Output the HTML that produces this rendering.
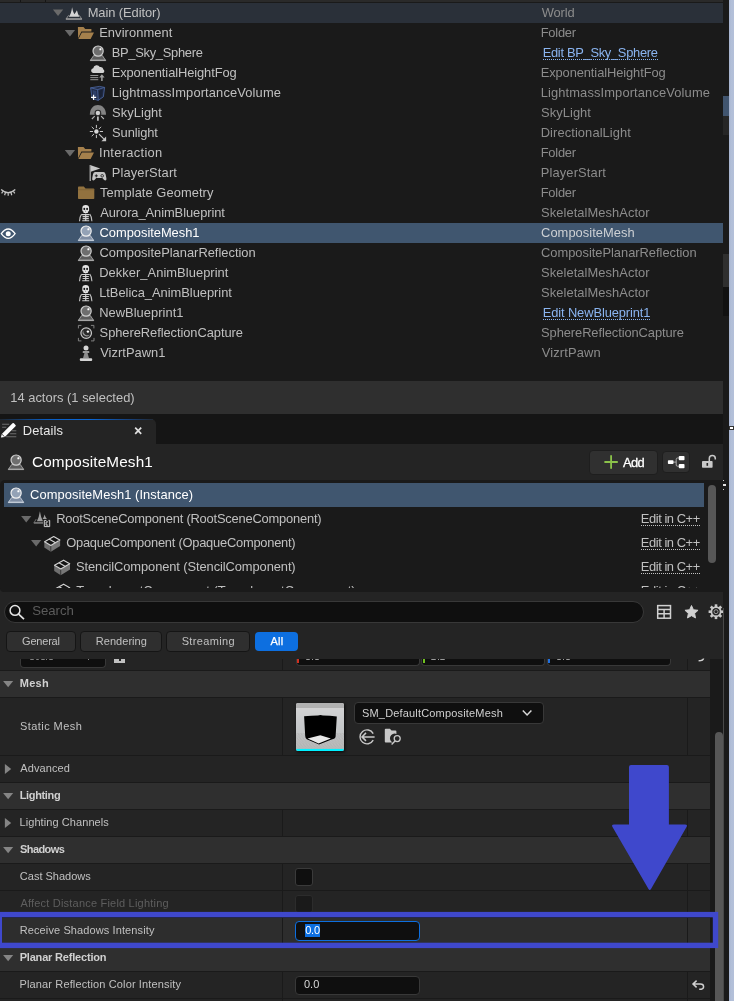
<!DOCTYPE html>
<html lang="en"><head><meta charset="utf-8"><title>Details</title>
<style>
html,body{margin:0;padding:0;background:#1a1a1a;}
body{width:734px;height:1001px;position:relative;overflow:hidden;font-family:"Liberation Sans", sans-serif;}
#w{position:absolute;left:0;top:0;width:734px;height:1001px;overflow:hidden;will-change:transform;}
#w>div,#w>svg,#w>span{position:absolute;}
.t{white-space:nowrap;display:block;}
svg{overflow:visible;}
</style></head><body><div id="w">
<div style="left:0px;top:0px;width:734px;height:1001px;background:#1a1a1a;"></div>
<div style="left:0px;top:0px;width:723px;height:2px;background:#2a2a2a;"></div>
<div style="left:0px;top:3px;width:723px;height:20px;background:#2a3039;"></div>
<div style="left:0px;top:223px;width:723px;height:20px;background:#40566f;"></div>
<span class="t" style="left:87.67px;top:7px;font-size:12.9px;line-height:12.9px;color:#c0c0c0;letter-spacing:-0.067px;">Main (Editor)</span>
<span class="t" style="left:99.17px;top:27px;font-size:12.9px;line-height:12.9px;color:#c0c0c0;letter-spacing:0.090px;">Environment</span>
<span class="t" style="left:111.67px;top:47px;font-size:12.9px;line-height:12.9px;color:#c0c0c0;letter-spacing:-0.277px;">BP_Sky_Sphere</span>
<span class="t" style="left:111.67px;top:67px;font-size:12.9px;line-height:12.9px;color:#c0c0c0;letter-spacing:-0.096px;">ExponentialHeightFog</span>
<span class="t" style="left:111.67px;top:87px;font-size:12.9px;line-height:12.9px;color:#c0c0c0;letter-spacing:0.126px;">LightmassImportanceVolume</span>
<span class="t" style="left:112.12px;top:107px;font-size:12.9px;line-height:12.9px;color:#c0c0c0;letter-spacing:0.054px;">SkyLight</span>
<span class="t" style="left:112.12px;top:127px;font-size:12.9px;line-height:12.9px;color:#c0c0c0;letter-spacing:-0.110px;">Sunlight</span>
<span class="t" style="left:99.04px;top:147px;font-size:12.9px;line-height:12.9px;color:#c0c0c0;letter-spacing:0.296px;">Interaction</span>
<span class="t" style="left:111.67px;top:167px;font-size:12.9px;line-height:12.9px;color:#c0c0c0;letter-spacing:0.151px;">PlayerStart</span>
<span class="t" style="left:99.94px;top:187px;font-size:12.9px;line-height:12.9px;color:#c0c0c0;letter-spacing:0.061px;">Template Geometry</span>
<span class="t" style="left:100.20px;top:207px;font-size:12.9px;line-height:12.9px;color:#c0c0c0;letter-spacing:-0.072px;">Aurora_AnimBlueprint</span>
<span class="t" style="left:99.56px;top:227px;font-size:12.9px;line-height:12.9px;color:#ffffff;letter-spacing:-0.028px;">CompositeMesh1</span>
<span class="t" style="left:99.56px;top:247px;font-size:12.9px;line-height:12.9px;color:#c0c0c0;letter-spacing:-0.003px;">CompositePlanarReflection</span>
<span class="t" style="left:99.17px;top:267px;font-size:12.9px;line-height:12.9px;color:#c0c0c0;letter-spacing:0.054px;">Dekker_AnimBlueprint</span>
<span class="t" style="left:99.17px;top:287px;font-size:12.9px;line-height:12.9px;color:#c0c0c0;letter-spacing:-0.024px;">LtBelica_AnimBlueprint</span>
<span class="t" style="left:99.17px;top:307px;font-size:12.9px;line-height:12.9px;color:#c0c0c0;letter-spacing:0.041px;">NewBlueprint1</span>
<span class="t" style="left:99.62px;top:327px;font-size:12.9px;line-height:12.9px;color:#c0c0c0;letter-spacing:-0.065px;">SphereReflectionCapture</span>
<span class="t" style="left:100.20px;top:347px;font-size:12.9px;line-height:12.9px;color:#c0c0c0;letter-spacing:0.037px;">VizrtPawn1</span>
<span class="t" style="left:541.70px;top:7px;font-size:12.9px;line-height:12.9px;color:#8c8c8c;letter-spacing:-0.110px;">World</span>
<span class="t" style="left:540.67px;top:27px;font-size:12.9px;line-height:12.9px;color:#8c8c8c;letter-spacing:-0.228px;">Folder</span>
<span class="t" style="left:542.67px;top:47px;font-size:12.9px;line-height:12.9px;color:#8ab4f0;letter-spacing:-0.301px;height:12px;border-bottom:1px dotted #8ab4f0;">Edit BP_Sky_Sphere</span>
<span class="t" style="left:540.67px;top:67px;font-size:12.9px;line-height:12.9px;color:#8c8c8c;letter-spacing:-0.096px;">ExponentialHeightFog</span>
<span class="t" style="left:540.67px;top:87px;font-size:12.9px;line-height:12.9px;color:#8c8c8c;letter-spacing:0.126px;">LightmassImportanceVolume</span>
<span class="t" style="left:541.12px;top:107px;font-size:12.9px;line-height:12.9px;color:#8c8c8c;letter-spacing:0.054px;">SkyLight</span>
<span class="t" style="left:540.67px;top:127px;font-size:12.9px;line-height:12.9px;color:#8c8c8c;letter-spacing:0.095px;">DirectionalLight</span>
<span class="t" style="left:540.67px;top:147px;font-size:12.9px;line-height:12.9px;color:#8c8c8c;letter-spacing:-0.228px;">Folder</span>
<span class="t" style="left:540.67px;top:167px;font-size:12.9px;line-height:12.9px;color:#8c8c8c;letter-spacing:0.151px;">PlayerStart</span>
<span class="t" style="left:540.67px;top:187px;font-size:12.9px;line-height:12.9px;color:#8c8c8c;letter-spacing:-0.228px;">Folder</span>
<span class="t" style="left:541.12px;top:207px;font-size:12.9px;line-height:12.9px;color:#8c8c8c;letter-spacing:0.061px;">SkeletalMeshActor</span>
<span class="t" style="left:541.06px;top:227px;font-size:12.9px;line-height:12.9px;color:#cdd0d4;letter-spacing:0.041px;">CompositeMesh</span>
<span class="t" style="left:541.06px;top:247px;font-size:12.9px;line-height:12.9px;color:#8c8c8c;letter-spacing:-0.024px;">CompositePlanarReflection</span>
<span class="t" style="left:541.12px;top:267px;font-size:12.9px;line-height:12.9px;color:#8c8c8c;letter-spacing:0.061px;">SkeletalMeshActor</span>
<span class="t" style="left:541.12px;top:287px;font-size:12.9px;line-height:12.9px;color:#8c8c8c;letter-spacing:0.061px;">SkeletalMeshActor</span>
<span class="t" style="left:542.67px;top:307px;font-size:12.9px;line-height:12.9px;color:#8ab4f0;letter-spacing:-0.106px;height:12px;border-bottom:1px dotted #8ab4f0;">Edit NewBlueprint1</span>
<span class="t" style="left:541.12px;top:327px;font-size:12.9px;line-height:12.9px;color:#8c8c8c;letter-spacing:-0.088px;">SphereReflectionCapture</span>
<span class="t" style="left:541.70px;top:347px;font-size:12.9px;line-height:12.9px;color:#8c8c8c;letter-spacing:0.149px;">VizrtPawn</span>
<div style="left:723px;top:0px;width:6px;height:1001px;background:#1a1a1a;"></div>
<div style="left:723px;top:96px;width:6px;height:20px;background:#41556f;"></div>
<div style="left:723px;top:116px;width:6px;height:19px;background:#262626;"></div>
<div style="left:723px;top:254px;width:6px;height:33px;background:#2f2f2f;"></div>
<div style="left:723px;top:287px;width:6px;height:29px;background:#111111;"></div>
<div style="left:729px;top:0px;width:5px;height:1001px;background:linear-gradient(90deg,#a6b3cf,#b2bfd8 40%,#b4c0d9);"></div>
<div style="left:729.3px;top:425.5px;width:4.4px;height:4.4px;background:#ffffff;border:1px solid #333;box-sizing:border-box;"></div>
<div style="left:723.4px;top:480px;width:1px;height:1.2px;background:#d0d0d0;"></div>
<div style="left:723.2px;top:484px;width:2.6px;height:2px;background:#e0e0e0;"></div>
<div style="left:723.4px;top:488.6px;width:1px;height:1.2px;background:#d0d0d0;"></div>
<div style="left:723.2px;top:608px;width:1px;height:393px;background:#484848;"></div>
<div style="left:20.3px;top:0px;width:1px;height:1.6px;background:#151515;"></div>
<div style="left:45.3px;top:0px;width:1px;height:1.6px;background:#151515;"></div>
<div style="left:0px;top:381px;width:723px;height:33px;background:#2f2f2f;"></div>
<span class="t" style="left:10.23px;top:392px;font-size:12.9px;line-height:12.9px;color:#c0c0c0;letter-spacing:0.022px;">14 actors (1 selected)</span>
<div style="left:0px;top:414px;width:723px;height:30px;background:#151515;"></div>
<div style="left:0px;top:418.6px;width:156px;height:25.4px;background:#242424;border-top-right-radius:5px;"></div>
<div style="left:0px;top:418.6px;width:153px;height:1.4px;background:linear-gradient(90deg,#1e2630 0%,#0a5cc0 30%,#0a68d8 58%,#17407a 85%,#222a34 100%);"></div>
<span class="t" style="left:22.77px;top:425px;font-size:12.9px;line-height:12.9px;color:#e8e8e8;letter-spacing:0.130px;">Details</span>
<svg style="left:0;top:0" width="160" height="445"><path d="M135.2 427.7 L141.2 433.9 M141.2 427.7 L135.2 433.9" stroke="#e0e0e0" stroke-width="1.7"/></svg>
<div style="left:0px;top:444px;width:723px;height:557px;background:#242424;"></div>
<span class="t" style="left:32.04px;top:454px;font-size:15.3px;line-height:15.3px;color:#ffffff;letter-spacing:0.134px;">CompositeMesh1</span>
<div style="left:588.7px;top:449.6px;width:69.4px;height:25.2px;background:#303030;border:1px solid #1e1e1e;border-radius:4px;box-sizing:border-box;"></div>
<span class="t" style="left:623.10px;top:457px;font-size:12.9px;line-height:12.9px;color:#ffffff;letter-spacing:-0.624px;-webkit-text-stroke:0.3px #ffffff;">Add</span>
<div style="left:662px;top:450.8px;width:28.2px;height:22.2px;background:#303030;border:1px solid #1e1e1e;border-radius:4px;box-sizing:border-box;"></div>
<div style="left:0px;top:479.5px;width:723px;height:112px;background:#1a1a1a;border-radius:5px 0 0 5px;"></div>
<div style="left:4px;top:483px;width:700px;height:24px;background:#40566f;"></div>
<span class="t" style="left:30.05px;top:489px;font-size:12.9px;line-height:12.9px;color:#ffffff;letter-spacing:0.075px;">CompositeMesh1 (Instance)</span>
<span class="t" style="left:56.17px;top:513px;font-size:12.9px;line-height:12.9px;color:#c0c0c0;letter-spacing:-0.198px;">RootSceneComponent (RootSceneComponent)</span>
<span class="t" style="left:66.22px;top:537px;font-size:12.9px;line-height:12.9px;color:#c0c0c0;letter-spacing:-0.243px;">OpaqueComponent (OpaqueComponent)</span>
<span class="t" style="left:76.02px;top:561px;font-size:12.9px;line-height:12.9px;color:#c0c0c0;letter-spacing:-0.094px;">StencilComponent (StencilComponent)</span>
<span class="t" style="left:76.34px;top:585px;font-size:12.9px;line-height:12.9px;color:#c0c0c0;letter-spacing:0.003px;">TranslucentComponent (TranslucentComponent)</span>
<span class="t" style="left:640.87px;top:513px;font-size:12.9px;line-height:12.9px;color:#c0c0c0;letter-spacing:-0.441px;height:12px;border-bottom:1px dotted #c0c0c0;">Edit in C++</span>
<span class="t" style="left:640.87px;top:537px;font-size:12.9px;line-height:12.9px;color:#c0c0c0;letter-spacing:-0.441px;height:12px;border-bottom:1px dotted #c0c0c0;">Edit in C++</span>
<span class="t" style="left:640.87px;top:561px;font-size:12.9px;line-height:12.9px;color:#c0c0c0;letter-spacing:-0.441px;height:12px;border-bottom:1px dotted #c0c0c0;">Edit in C++</span>
<span class="t" style="left:640.87px;top:585px;font-size:12.9px;line-height:12.9px;color:#c0c0c0;letter-spacing:-0.441px;height:12px;border-bottom:1px dotted #c0c0c0;">Edit in C++</span>
<div style="left:708px;top:485px;width:7.5px;height:77.5px;background:#575757;border-radius:4px;"></div>
<div style="left:0px;top:588px;width:723px;height:3.5px;background:#1a1a1a;border-radius:0 0 0 5px;"></div>
<div style="left:0px;top:591.5px;width:723px;height:10px;background:#242424;"></div>
<div style="left:4px;top:601px;width:640px;height:22px;background:#0f0f0f;border:1px solid #383838;border-radius:11px;box-sizing:border-box;"></div>
<span class="t" style="left:32.31px;top:604px;font-size:13.2px;line-height:13.2px;color:#5c5c5c;letter-spacing:-0.057px;">Search</span>
<div style="left:6.2px;top:631px;width:69.8px;height:20.6px;background:#2f2f2f;border:1px solid #151515;border-radius:4px;box-sizing:border-box;"></div>
<span class="t" style="left:22.05px;top:636px;font-size:11px;line-height:11px;color:#c0c0c0;letter-spacing:-0.200px;">General</span>
<div style="left:80.2px;top:631px;width:81.39999999999999px;height:20.6px;background:#2f2f2f;border:1px solid #151515;border-radius:4px;box-sizing:border-box;"></div>
<span class="t" style="left:95.82px;top:636px;font-size:11px;line-height:11px;color:#c0c0c0;letter-spacing:0.037px;">Rendering</span>
<div style="left:166.3px;top:631px;width:83.39999999999998px;height:20.6px;background:#2f2f2f;border:1px solid #151515;border-radius:4px;box-sizing:border-box;"></div>
<span class="t" style="left:181.70px;top:636px;font-size:11px;line-height:11px;color:#c0c0c0;letter-spacing:0.342px;">Streaming</span>
<div style="left:255px;top:632px;width:43.39999999999998px;height:18.6px;background:#0d6fe0;border-radius:4px;"></div>
<span class="t" style="left:270.60px;top:636px;font-size:11px;line-height:11px;color:#ffffff;letter-spacing:0.180px;-webkit-text-stroke:0.25px #fff;">All</span>
<div style="left:0px;top:658.5px;width:710px;height:343px;background:#1a1a1a;"></div>
<div style="left:0px;top:658.5px;width:710px;height:11.5px;background:#242424;"></div>
<div style="left:282.2px;top:658.5px;width:1px;height:11.5px;background:#1a1a1a;"></div>
<div style="left:687.2px;top:658.5px;width:1px;height:11.5px;background:#1a1a1a;"></div>
<div style="left:0px;top:670.0px;width:710px;height:1px;background:#1a1a1a;"></div>
<div style="left:0px;top:671px;width:710px;height:26px;background:#2f2f2f;"></div>
<div style="left:0px;top:697px;width:710px;height:1px;background:#1a1a1a;"></div>
<span class="t" style="left:19.73px;top:678px;font-size:11px;line-height:11px;color:#d0d0d0;font-weight:700;letter-spacing:0.256px;">Mesh</span>
<div style="left:0px;top:698px;width:710px;height:57px;background:#242424;"></div>
<div style="left:282.2px;top:698px;width:1px;height:57px;background:#1a1a1a;"></div>
<div style="left:687.2px;top:698px;width:1px;height:57px;background:#1a1a1a;"></div>
<div style="left:0px;top:755px;width:710px;height:1px;background:#1a1a1a;"></div>
<span class="t" style="left:20.10px;top:721px;font-size:11px;line-height:11px;color:#c0c0c0;letter-spacing:0.420px;">Static Mesh</span>
<div style="left:0px;top:756px;width:710px;height:26px;background:#242424;"></div>
<div style="left:0px;top:782px;width:710px;height:1px;background:#1a1a1a;"></div>
<span class="t" style="left:20.30px;top:763px;font-size:11px;line-height:11px;color:#c0c0c0;letter-spacing:0.078px;">Advanced</span>
<div style="left:0px;top:783px;width:710px;height:26px;background:#2f2f2f;"></div>
<div style="left:0px;top:809px;width:710px;height:1px;background:#1a1a1a;"></div>
<span class="t" style="left:19.68px;top:790px;font-size:11px;line-height:11px;color:#d0d0d0;font-weight:700;letter-spacing:-0.347px;">Lighting</span>
<div style="left:0px;top:810px;width:710px;height:26px;background:#242424;"></div>
<div style="left:282.2px;top:810px;width:1px;height:26px;background:#1a1a1a;"></div>
<div style="left:687.2px;top:810px;width:1px;height:26px;background:#1a1a1a;"></div>
<div style="left:0px;top:836px;width:710px;height:1px;background:#1a1a1a;"></div>
<span class="t" style="left:19.52px;top:817px;font-size:11px;line-height:11px;color:#c0c0c0;letter-spacing:0.075px;">Lighting Channels</span>
<div style="left:0px;top:837px;width:710px;height:26px;background:#2f2f2f;"></div>
<div style="left:0px;top:863px;width:710px;height:1px;background:#1a1a1a;"></div>
<span class="t" style="left:20.12px;top:844px;font-size:11px;line-height:11px;color:#d0d0d0;font-weight:700;letter-spacing:-0.602px;">Shadows</span>
<div style="left:0px;top:864px;width:710px;height:26px;background:#242424;"></div>
<div style="left:282.2px;top:864px;width:1px;height:26px;background:#1a1a1a;"></div>
<div style="left:687.2px;top:864px;width:1px;height:26px;background:#1a1a1a;"></div>
<div style="left:0px;top:890px;width:710px;height:1px;background:#1a1a1a;"></div>
<span class="t" style="left:19.85px;top:871px;font-size:11px;line-height:11px;color:#c0c0c0;">Cast Shadows</span>
<div style="left:0px;top:891px;width:710px;height:26px;background:#242424;"></div>
<div style="left:282.2px;top:891px;width:1px;height:26px;background:#1a1a1a;"></div>
<div style="left:687.2px;top:891px;width:1px;height:26px;background:#1a1a1a;"></div>
<div style="left:0px;top:917px;width:710px;height:1px;background:#1a1a1a;"></div>
<span class="t" style="left:20.40px;top:898px;font-size:11px;line-height:11px;color:#5e5e5e;letter-spacing:0.204px;">Affect Distance Field Lighting</span>
<div style="left:0px;top:918px;width:710px;height:26px;background:#242424;"></div>
<div style="left:282.2px;top:918px;width:1px;height:26px;background:#1a1a1a;"></div>
<div style="left:687.2px;top:918px;width:1px;height:26px;background:#1a1a1a;"></div>
<div style="left:0px;top:944px;width:710px;height:1px;background:#1a1a1a;"></div>
<div style="left:0px;top:918px;width:282.2px;height:26px;background:#2d2d2d;"></div>
<div style="left:283.2px;top:918px;width:404px;height:26px;background:#2d2d2d;"></div>
<div style="left:688.2px;top:918px;width:21.8px;height:26px;background:#2d2d2d;"></div>
<span class="t" style="left:19.72px;top:925px;font-size:11px;line-height:11px;color:#c0c0c0;letter-spacing:0.109px;">Receive Shadows Intensity</span>
<div style="left:0px;top:945px;width:710px;height:26px;background:#2f2f2f;"></div>
<div style="left:0px;top:971px;width:710px;height:1px;background:#1a1a1a;"></div>
<span class="t" style="left:19.68px;top:952px;font-size:11px;line-height:11px;color:#d0d0d0;font-weight:700;letter-spacing:-0.186px;">Planar Reflection</span>
<div style="left:0px;top:972px;width:710px;height:26px;background:#242424;"></div>
<div style="left:282.2px;top:972px;width:1px;height:26px;background:#1a1a1a;"></div>
<div style="left:687.2px;top:972px;width:1px;height:26px;background:#1a1a1a;"></div>
<div style="left:0px;top:998px;width:710px;height:1px;background:#1a1a1a;"></div>
<span class="t" style="left:19.52px;top:979px;font-size:11px;line-height:11px;color:#c0c0c0;letter-spacing:0.133px;">Planar Reflection Color Intensity</span>
<div style="left:0px;top:999px;width:710px;height:2px;background:#242424;"></div>
<div style="left:282.2px;top:999px;width:1px;height:2px;background:#1a1a1a;"></div>
<div style="left:687.2px;top:999px;width:1px;height:2px;background:#1a1a1a;"></div>
<div style="left:0px;top:1001px;width:710px;height:1px;background:#1a1a1a;"></div>
<div style="left:710px;top:658.5px;width:13px;height:343px;background:#1a1a1a;"></div>
<div style="left:714.5px;top:732px;width:8px;height:275px;background:#575757;border-radius:4px;"></div>
<div style="left:20px;top:658.5px;width:86px;height:9px;background:#0f0f0f;border:1px solid #383838;border-top:none;border-radius:0 0 4px 4px;box-sizing:border-box;"></div>
<div style="left:30px;top:658.5px;width:4px;height:1.6px;background:#808080;border-radius:0 0 2px 2px;"></div>
<div style="left:35.6px;top:658.5px;width:3.6px;height:1.6px;background:#808080;border-radius:0 0 2px 2px;"></div>
<div style="left:40.6px;top:658.5px;width:4px;height:1.6px;background:#808080;border-radius:0 0 2px 2px;"></div>
<div style="left:46px;top:658.5px;width:1.2px;height:1.6px;background:#808080;"></div>
<div style="left:48.6px;top:658.5px;width:4px;height:1.6px;background:#808080;border-radius:0 0 2px 2px;"></div>
<div style="left:87.5px;top:658.5px;width:1.5px;height:1.5px;background:#8a8a8a;"></div>
<div style="left:114px;top:658.5px;width:11px;height:4.5px;background:#c0c0c0;"></div>
<div style="left:118.5px;top:658.5px;width:2px;height:2px;background:#242424;"></div>
<div style="left:295.5px;top:658.5px;width:124px;height:7.5px;background:#0f0f0f;border:1px solid #383838;border-top:none;border-radius:0 0 4px 4px;box-sizing:border-box;"></div>
<div style="left:297.0px;top:658.5px;width:2px;height:4.5px;background:#d03020;"></div>
<div style="left:305.5px;top:658.5px;width:4.6px;height:1.8px;background:#9a9a9a;border-radius:0 0 2px 2px;"></div>
<div style="left:312.1px;top:658.5px;width:1.3px;height:1.6px;background:#9a9a9a;"></div>
<div style="left:314.5px;top:658.5px;width:4.6px;height:1.8px;background:#9a9a9a;border-radius:0 0 2px 2px;"></div>
<div style="left:421.0px;top:658.5px;width:124px;height:7.5px;background:#0f0f0f;border:1px solid #383838;border-top:none;border-radius:0 0 4px 4px;box-sizing:border-box;"></div>
<div style="left:422.5px;top:658.5px;width:2px;height:4.5px;background:#70c020;"></div>
<div style="left:431.0px;top:658.5px;width:4.6px;height:1.8px;background:#9a9a9a;border-radius:0 0 2px 2px;"></div>
<div style="left:437.6px;top:658.5px;width:1.3px;height:1.6px;background:#9a9a9a;"></div>
<div style="left:440.0px;top:658.5px;width:4.6px;height:1.8px;background:#9a9a9a;border-radius:0 0 2px 2px;"></div>
<div style="left:546.5px;top:658.5px;width:124px;height:7.5px;background:#0f0f0f;border:1px solid #383838;border-top:none;border-radius:0 0 4px 4px;box-sizing:border-box;"></div>
<div style="left:548.0px;top:658.5px;width:2px;height:4.5px;background:#2070e0;"></div>
<div style="left:556.5px;top:658.5px;width:4.6px;height:1.8px;background:#9a9a9a;border-radius:0 0 2px 2px;"></div>
<div style="left:563.1px;top:658.5px;width:1.3px;height:1.6px;background:#9a9a9a;"></div>
<div style="left:565.5px;top:658.5px;width:4.6px;height:1.8px;background:#9a9a9a;border-radius:0 0 2px 2px;"></div>
<svg style="left:296px;top:703px;filter:drop-shadow(1px 1.5px 1.5px rgba(0,0,0,0.7));" width="48" height="48" viewBox="0 0 48 48"><defs><clipPath id="th"><rect width="48" height="48" rx="2"/></clipPath><linearGradient id="tg" x1="0" y1="0" x2="0" y2="1"><stop offset="0" stop-color="#d6d6d6"/><stop offset="0.5" stop-color="#c6c8ca"/><stop offset="1" stop-color="#bcbcbc"/></linearGradient><pattern id="tp" width="3" height="2.4" patternUnits="userSpaceOnUse" patternTransform="skewX(-35)"><rect width="1.5" height="1.2" fill="#9c9c9c"/><rect x="1.5" y="1.2" width="1.5" height="1.2" fill="#9c9c9c"/></pattern></defs><g clip-path="url(#th)"><rect width="48" height="48" fill="url(#tg)"/><rect width="48" height="5" fill="#b2b2b2"/><path d="M0 30 L10 30 L14 36 L34 36 L40 30 L48 30 V48 H0Z" fill="url(#tp)" opacity="0.4"/><path d="M8.1 13.3 Q16 12.6 22 12.4 Q24.3 11.6 27 12.4 Q34 12.6 40.8 13.4 L39.6 33.6 Q39.4 36 35.6 36.6 L23 41.4 L10.8 36.2 Q9.4 35.4 9.2 33Z" fill="#000"/><path d="M11.6 35.6 L24.3 32.2 L34.9 35.6 L22.6 40.4Z" fill="#e8e8e8"/><rect y="45.9" width="48" height="2.1" fill="#00f0ff"/></g></svg>
<div style="left:354.1px;top:702.3px;width:190.4px;height:21.4px;background:#0f0f0f;border:1px solid #383838;border-radius:4px;box-sizing:border-box;"></div>
<span class="t" style="left:362.00px;top:708px;font-size:11px;line-height:11px;color:#d0d0d0;letter-spacing:0.174px;">SM_DefaultCompositeMesh</span>
<div style="left:295.2px;top:868px;width:17.6px;height:17.6px;background:#0f0f0f;border:1px solid #3a3a3a;border-radius:3px;box-sizing:border-box;"></div>
<div style="left:295.2px;top:895px;width:17.6px;height:17.6px;background:#1a1a1a;border:1px solid #2c2c2c;border-radius:3px;box-sizing:border-box;"></div>
<div style="left:294.8px;top:920.9px;width:124.8px;height:19.8px;background:#0f0f0f;border:1px solid #0d6fe0;border-radius:4px;box-sizing:border-box;"></div>
<div style="left:304.8px;top:923.9px;width:15.4px;height:13.1px;background:#0d6fe0;"></div>
<span class="t" style="left:305.21px;top:925px;font-size:11px;line-height:11px;color:#ffffff;letter-spacing:-0.204px;">0.0</span>
<div style="left:294.8px;top:975.5px;width:124.8px;height:19px;background:#0f0f0f;border:1px solid #383838;border-radius:4px;box-sizing:border-box;"></div>
<span class="t" style="left:304.01px;top:979px;font-size:11px;line-height:11px;color:#d8d8d8;letter-spacing:-0.004px;">0.0</span>
<svg style="left:0;top:0" width="734" height="1001"><path d="M631 765 H666.8 Q668.9 765 668.9 767 V824.5 H685 Q688 824.5 686.5 827 L651 889 Q649.7 891 648.5 889 L612.5 827 Q611 824.5 614 824.5 H629 V767 Q629 765 631 765Z" fill="#3f48cc"/><rect x="-0.7" y="914.6" width="716.2" height="30.8" fill="none" stroke="#3f48cc" stroke-width="5.4"/></svg>
<svg style="left:0;top:0" width="734" height="1001"><defs><clipPath id="cl1"><rect x="0" y="480" width="720" height="108"/></clipPath><clipPath id="cl2"><rect x="700" y="600" width="23" height="24"/></clipPath><clipPath id="cl3"><rect x="690" y="658.5" width="20" height="10"/></clipPath></defs><path d="M52.9 9.5 h10.3 l-5.15 6.4Z" fill="#6a6a6a"/><g transform="translate(65.7 7.1)"><path d="M3.2 9.6 Q5.6 6.5 6.4 0.2 Q7.2 5 8.6 7.2 Q10.2 5.5 11.2 3.2 Q12 6.8 13.8 9.6Z" fill="#d4d4d4"/><path d="M2.9 8.2 L0.3 12 H16.1 L13.6 8.2" fill="none" stroke="#8e8e8e" stroke-width="1"/><rect x="0.2" y="11.2" width="16" height="1.4" fill="#9a9a9a"/></g><path d="M64.8 30 h10.3 l-5.15 6.4Z" fill="#6a6a6a"/><g transform="translate(77.9 26.9)"><path d="M0 0.2 h5.6 l1.7 1.9 h6.2 v2.6 h-10 l-3.3 6.6Z" fill="#a5804c"/><path d="M4 5.7 h12.1 l-3.4 6.5 h-12.2Z" fill="#a5804c"/></g><g transform="translate(90 45)"><path d="M3.6 10.6 L12.4 10.6 L15.7 15.6 L0.3 15.6Z" fill="#5c5c5c" stroke="#a8a8a8" stroke-width="0.9" stroke-linejoin="round"/><rect x="0.3" y="14.6" width="15.4" height="1.3" fill="#a8a8a8"/><circle cx="8.1" cy="6.1" r="5.1" fill="#6e6e6e" stroke="#cfcfcf" stroke-width="1.2"/><rect x="9.4" y="3.3" width="2" height="2" rx="0.6" fill="#ffffff"/></g><g transform="translate(90.3 65.3)"><path d="M2.6 7.6 a2.4 2.4 0 0 1 0.3 -4.7 a3.6 3.6 0 0 1 6.6 -1.2 a3 3 0 0 1 3.6 2.6 a1.8 1.8 0 0 1 -0.4 3.3Z" fill="#d2d2d2"/><path d="M0 10.2 h8 M0 12.3 h8 M0 14.4 h8" stroke="#a0a0a0" stroke-width="0.9"/><path d="M11.6 15.6 v-4" stroke="#a0a0a0" stroke-width="1.5"/><path d="M8.9 12.3 l2.7 -3.4 l2.7 3.4Z" fill="#a0a0a0"/></g><g transform="translate(90 86.2)"><path d="M0.6 1.6 L9.5 0.2 L14.6 1.2 L13.4 10.6 L8.2 14.2 L2.2 12.4Z" fill="#222c46" stroke="#4c68a4" stroke-width="0.8" stroke-linejoin="round"/><path d="M0.6 1.6 L7.6 3.4 L14.6 1.2 M7.6 3.4 L8.2 14.2" fill="none" stroke="#4c68a4" stroke-width="0.8"/><path d="M2.5 3.8 L6.3 4.8 L6.6 11.3 L3.4 10.3Z" fill="#2e3f68"/><path d="M9 4.6 L12.8 3.2 L12 9.8 L9.4 11.6Z" fill="#1a2236"/><path d="M1 11.2 h5.2 M3.6 8.6 v5.2" stroke="#ffffff" stroke-width="1.1"/></g><g transform="translate(89.8 105)"><path d="M0 9.8 C0 -3.2 16.2 -3.2 16.2 9.8Z" fill="#848484"/><circle cx="8.1" cy="8" r="3.3" fill="#2a2a2a"/><rect x="4.8" y="8" width="6.6" height="1.8" fill="#2a2a2a"/><circle cx="8.1" cy="8" r="2.2" fill="#d0d0d0"/><path d="M8.1 11.6 v4.2" stroke="#b8b8b8" stroke-width="1.8"/><path d="M4.9 11.2 l-2.8 2.8 M11.3 11.2 l2.8 2.8" stroke="#b8b8b8" stroke-width="1.1"/></g><g transform="translate(96.4 131.5)"><circle r="2.2" fill="#d8d8d8"/><path d="M3.40 0.00 L6.60 0.00 M0.00 3.40 L0.00 6.60 M-2.40 2.40 L-4.67 4.67 M-3.40 0.00 L-6.60 0.00 M-2.40 -2.40 L-4.67 -4.67 M-0.00 -3.40 L-0.00 -6.60 M2.40 -2.40 L4.67 -4.67 " stroke="#c8c8c8" stroke-width="1"/><path d="M2.6 2.6 L7.4 7.4" stroke="#c8c8c8" stroke-width="1.2"/><path d="M9.7 9.7 V5 L5 9.7Z" fill="#c8c8c8"/></g><path d="M64.8 150 h10.3 l-5.15 6.4Z" fill="#6a6a6a"/><g transform="translate(77.9 146.9)"><path d="M0 0.2 h5.6 l1.7 1.9 h6.2 v2.6 h-10 l-3.3 6.6Z" fill="#a5804c"/><path d="M4 5.7 h12.1 l-3.4 6.5 h-12.2Z" fill="#a5804c"/></g><g transform="translate(89.6 165)"><path d="M0.6 0 v16" stroke="#b8b8b8" stroke-width="1.2"/><path d="M1.2 0.3 L10.6 3.4 L1.2 6.8Z" fill="#c8c8c8"/><path d="M5.6 7 h8.2 q1.6 0 2.2 2.2 l0.8 4 q0.4 2.4 -1.2 2.4 q-1 0 -2.2 -1.8 l-0.6 -0.8 h-6.2 l-0.6 0.8 q-1.2 1.8 -2.2 1.8 q-1.6 0 -1.2 -2.4 l0.8 -4 q0.6 -2.2 2.2 -2.2Z" fill="#c4c4c4"/><path d="M5.2 10.8 h3 M6.7 9.3 v3" stroke="#1a1a1a" stroke-width="0.9"/><circle cx="12.6" cy="10.8" r="1.3" fill="none" stroke="#1a1a1a" stroke-width="0.8"/></g><g transform="translate(78 186.6)"><path d="M0.8 0 h5 l1.7 1.9 h8 q0.8 0 0.8 0.8 v9 q0 0.8 -0.8 0.8 h-14.7 q-0.8 0 -0.8 -0.8 v-10.9 q0 -0.8 0.8 -0.8Z" fill="#92723f"/><path d="M0 3.1 h16.3" stroke="#7d6236" stroke-width="0.7"/></g><g transform="translate(0.8 189)"><path d="M0.3 0.5 Q7.3 6.8 14.5 0.5" fill="none" stroke="#c4c4c4" stroke-width="1.4"/><path d="M2.2 2.4 l-1.4 2 M4.6 3.7 l-0.8 2.5 M7.4 4.2 v2.6 M10.2 3.7 l0.8 2.5 M12.6 2.4 l1.4 2" stroke="#c4c4c4" stroke-width="1.2"/></g><g transform="translate(79 205.4)"><path d="M3.3 2.6 a3.4 2.9 0 0 1 6.8 0 v2.2 q0 1.2 -1.2 1.6 v1.3 h-4.4 v-1.3 q-1.2 -0.4 -1.2 -1.6Z" fill="#e4e4e4"/><ellipse cx="5.3" cy="3.6" rx="0.95" ry="1.15" fill="#1a1a1a"/><ellipse cx="8.1" cy="3.6" rx="0.95" ry="1.15" fill="#1a1a1a"/><path d="M6.7 5.2 l-0.5 1 h1Z" fill="#1a1a1a"/><path d="M6.7 8 v7.6" stroke="#d0d0d0" stroke-width="1.2"/><path d="M2.9 9.2 h7.6 M3.6 11.2 h6.2 M3.6 13.2 h6.2 M3.2 15.4 h7" stroke="#d0d0d0" stroke-width="1.05"/><path d="M2.6 8.8 Q0.8 11 0.5 15.8 M10.8 8.8 Q12.6 11 12.9 15.8" fill="none" stroke="#c0c0c0" stroke-width="1.1"/></g><g transform="translate(78 225)"><path d="M3.6 10.6 L12.4 10.6 L15.7 15.6 L0.3 15.6Z" fill="#7f8da3" stroke="#c4ccd8" stroke-width="0.9" stroke-linejoin="round"/><rect x="0.3" y="14.6" width="15.4" height="1.3" fill="#c4ccd8"/><circle cx="8.1" cy="6.1" r="5.1" fill="#94a2b6" stroke="#f0f0f0" stroke-width="1.2"/><rect x="9.4" y="3.3" width="2" height="2" rx="0.6" fill="#ffffff"/></g><g transform="translate(0.8 228.7)"><path d="M0.5 5 Q7.4 -4.4 14.3 5 Q7.4 14.4 0.5 5Z" fill="none" stroke="#ffffff" stroke-width="1.3"/><circle cx="7.4" cy="5" r="2.5" fill="#ffffff"/></g><g transform="translate(78 245)"><path d="M3.6 10.6 L12.4 10.6 L15.7 15.6 L0.3 15.6Z" fill="#5c5c5c" stroke="#a8a8a8" stroke-width="0.9" stroke-linejoin="round"/><rect x="0.3" y="14.6" width="15.4" height="1.3" fill="#a8a8a8"/><circle cx="8.1" cy="6.1" r="5.1" fill="#6e6e6e" stroke="#cfcfcf" stroke-width="1.2"/><rect x="9.4" y="3.3" width="2" height="2" rx="0.6" fill="#ffffff"/></g><g transform="translate(79 265.4)"><path d="M3.3 2.6 a3.4 2.9 0 0 1 6.8 0 v2.2 q0 1.2 -1.2 1.6 v1.3 h-4.4 v-1.3 q-1.2 -0.4 -1.2 -1.6Z" fill="#e4e4e4"/><ellipse cx="5.3" cy="3.6" rx="0.95" ry="1.15" fill="#1a1a1a"/><ellipse cx="8.1" cy="3.6" rx="0.95" ry="1.15" fill="#1a1a1a"/><path d="M6.7 5.2 l-0.5 1 h1Z" fill="#1a1a1a"/><path d="M6.7 8 v7.6" stroke="#d0d0d0" stroke-width="1.2"/><path d="M2.9 9.2 h7.6 M3.6 11.2 h6.2 M3.6 13.2 h6.2 M3.2 15.4 h7" stroke="#d0d0d0" stroke-width="1.05"/><path d="M2.6 8.8 Q0.8 11 0.5 15.8 M10.8 8.8 Q12.6 11 12.9 15.8" fill="none" stroke="#c0c0c0" stroke-width="1.1"/></g><g transform="translate(79 285.4)"><path d="M3.3 2.6 a3.4 2.9 0 0 1 6.8 0 v2.2 q0 1.2 -1.2 1.6 v1.3 h-4.4 v-1.3 q-1.2 -0.4 -1.2 -1.6Z" fill="#e4e4e4"/><ellipse cx="5.3" cy="3.6" rx="0.95" ry="1.15" fill="#1a1a1a"/><ellipse cx="8.1" cy="3.6" rx="0.95" ry="1.15" fill="#1a1a1a"/><path d="M6.7 5.2 l-0.5 1 h1Z" fill="#1a1a1a"/><path d="M6.7 8 v7.6" stroke="#d0d0d0" stroke-width="1.2"/><path d="M2.9 9.2 h7.6 M3.6 11.2 h6.2 M3.6 13.2 h6.2 M3.2 15.4 h7" stroke="#d0d0d0" stroke-width="1.05"/><path d="M2.6 8.8 Q0.8 11 0.5 15.8 M10.8 8.8 Q12.6 11 12.9 15.8" fill="none" stroke="#c0c0c0" stroke-width="1.1"/></g><g transform="translate(78 305)"><path d="M3.6 10.6 L12.4 10.6 L15.7 15.6 L0.3 15.6Z" fill="#5c5c5c" stroke="#a8a8a8" stroke-width="0.9" stroke-linejoin="round"/><rect x="0.3" y="14.6" width="15.4" height="1.3" fill="#a8a8a8"/><circle cx="8.1" cy="6.1" r="5.1" fill="#6e6e6e" stroke="#cfcfcf" stroke-width="1.2"/><rect x="9.4" y="3.3" width="2" height="2" rx="0.6" fill="#ffffff"/></g><g transform="translate(78 325)"><path d="M0.4 3.4 v-3 h3 M12.9 0.4 h3 v3 M16 12.9 v3 h-3 M3.4 15.9 h-3 v-3" fill="none" stroke="#8c8c8c" stroke-width="0.9"/><circle cx="8.2" cy="8.1" r="5.3" fill="#2a2a2a" stroke="#c8c8c8" stroke-width="1.2"/><path d="M5.2 5.6 A3.8 3.8 0 1 0 11.9 9.4 A4.2 4.2 0 0 1 5.2 5.6Z" fill="#9a9a9a"/><circle cx="9.9" cy="6.6" r="1.2" fill="#ffffff"/></g><g transform="translate(79.8 345.3)"><circle cx="6.2" cy="2.7" r="2.5" fill="#d4d4d4"/><rect x="2.9" y="5.9" width="6.6" height="1.6" rx="0.5" fill="#c8c8c8"/><path d="M4.7 7.5 h3 l1.5 5.4 h-6Z" fill="#8c8c8c"/><rect x="0" y="12.9" width="12.4" height="2.7" rx="1" fill="#d4d4d4"/></g><g transform="translate(0.9 422.7)"><path d="M1.2 1.6 h7 M1.2 4.6 h4.2 M10.8 8 h4.6 M9.2 11 h6.2 M5.2 14 h10.2" stroke="#6e6e6e" stroke-width="1.1"/><path d="M0 14.9 L0.9 11.3 L11.6 0.6 Q12.3 -0.1 13 0.6 L14.6 2.2 Q15.3 2.9 14.6 3.6 L3.9 14.2Z" fill="#ffffff"/><path d="M0.9 11.4 L3.8 14.2" stroke="#242424" stroke-width="0.8"/></g><g transform="translate(8 454)"><path d="M3.6 10.6 L12.4 10.6 L15.7 15.6 L0.3 15.6Z" fill="#5c5c5c" stroke="#a8a8a8" stroke-width="0.9" stroke-linejoin="round"/><rect x="0.3" y="14.6" width="15.4" height="1.3" fill="#a8a8a8"/><circle cx="8.1" cy="6.1" r="5.1" fill="#6e6e6e" stroke="#cfcfcf" stroke-width="1.2"/><rect x="9.4" y="3.3" width="2" height="2" rx="0.6" fill="#ffffff"/></g><g transform="translate(8 487)"><path d="M3.6 10.6 L12.4 10.6 L15.7 15.6 L0.3 15.6Z" fill="#7f8da3" stroke="#c4ccd8" stroke-width="0.9" stroke-linejoin="round"/><rect x="0.3" y="14.6" width="15.4" height="1.3" fill="#c4ccd8"/><circle cx="8.1" cy="6.1" r="5.1" fill="#94a2b6" stroke="#f0f0f0" stroke-width="1.2"/><rect x="9.4" y="3.3" width="2" height="2" rx="0.6" fill="#ffffff"/></g><path d="M21.1 516 h10.3 l-5.15 6.4Z" fill="#6a6a6a"/><g transform="translate(34 511.5)"><path d="M2.9 9.7 Q5 6 5.9 -0.2 Q6.8 6 9 9.7Z" fill="#9c9c9c"/><path d="M8.6 7.6 Q9.8 6 10.6 3 Q11.4 6 12.9 7.6Z" fill="#9c9c9c"/><path d="M2.2 7.6 L-0.1 11.4" fill="none" stroke="#707070" stroke-width="0.9"/><rect x="-0.2" y="10.5" width="9.2" height="1.8" fill="#707070"/><path d="M12.4 8.9 h-2.1 v6.2 h5.4 v-6.2 h-1.2" fill="none" stroke="#d0d0d0" stroke-width="1"/><path d="M14.2 10.4 h-2.1 v3.2 h2.1" fill="none" stroke="#d0d0d0" stroke-width="1"/></g><path d="M31 540 h10.3 l-5.15 6.4Z" fill="#6a6a6a"/><g transform="translate(43.9 536)"><path d="M0.4 5.7 L6.95 9.6 V15.7 L0.4 11.5Z" fill="#6e6e6e"/><path d="M6.95 9.6 L16.2 4.1 V10 L6.95 15.7Z" fill="#777777"/><path d="M6.95 9.6 V15.7" stroke="#2a2a2a" stroke-width="0.7"/><path d="M0.7 5.7 L9.8 0.6 L15.9 4.1 L6.95 9.4Z" fill="#141414" stroke="#d4d4d4" stroke-width="1.15" stroke-linejoin="round"/><path d="M5.1 3.05 L11.6 6.85" stroke="#d4d4d4" stroke-width="1.15"/></g><g transform="translate(53.8 559.6)"><path d="M0.4 5.7 L6.95 9.6 V15.7 L0.4 11.5Z" fill="#6e6e6e"/><path d="M6.95 9.6 L16.2 4.1 V10 L6.95 15.7Z" fill="#777777"/><path d="M6.95 9.6 V15.7" stroke="#2a2a2a" stroke-width="0.7"/><path d="M0.7 5.7 L9.8 0.6 L15.9 4.1 L6.95 9.4Z" fill="#141414" stroke="#d4d4d4" stroke-width="1.15" stroke-linejoin="round"/><path d="M5.1 3.05 L11.6 6.85" stroke="#d4d4d4" stroke-width="1.15"/></g><g clip-path="url(#cl1)"><g transform="translate(53.8 583.6)"><path d="M0.4 5.7 L6.95 9.6 V15.7 L0.4 11.5Z" fill="#6e6e6e"/><path d="M6.95 9.6 L16.2 4.1 V10 L6.95 15.7Z" fill="#777777"/><path d="M6.95 9.6 V15.7" stroke="#2a2a2a" stroke-width="0.7"/><path d="M0.7 5.7 L9.8 0.6 L15.9 4.1 L6.95 9.4Z" fill="#141414" stroke="#d4d4d4" stroke-width="1.15" stroke-linejoin="round"/><path d="M5.1 3.05 L11.6 6.85" stroke="#d4d4d4" stroke-width="1.15"/></g></g><path d="M604.4 462 h13.4 M611.1 455.3 v13.4" stroke="#8bc24a" stroke-width="1.8"/><path d="M673 462.1 h3.2 M679 458 h-1.6 q-1.2 0 -1.2 1.2 v5.8 q0 1.2 1.2 1.2 h1.6" fill="none" stroke="#a8a8a8" stroke-width="1"/><rect x="667.9" y="460.2" width="5.6" height="3.9" rx="0.8" fill="#ffffff"/><rect x="678.8" y="455.9" width="5.7" height="4.3" rx="0.8" fill="#ffffff"/><rect x="678.8" y="464" width="5.7" height="4.3" rx="0.8" fill="#ffffff"/><rect x="702" y="461" width="10.6" height="6.8" rx="0.8" fill="#c8c8c8"/><rect x="706.5" y="463" width="1.6" height="2.8" fill="#242424"/><path d="M709.3 461 v-2.6 a3 3 0 0 1 6 0 v1.2" fill="none" stroke="#c8c8c8" stroke-width="1.5"/><circle cx="15" cy="610.4" r="4.9" fill="none" stroke="#e4e4e4" stroke-width="1.5"/><path d="M18.6 614.2 L24 619.2" stroke="#e4e4e4" stroke-width="1.7"/><rect x="657.7" y="605.6" width="12.8" height="12.6" fill="none" stroke="#d0d0d0" stroke-width="1.5"/><path d="M657.7 609.6 h12.8 M657.7 613.7 h12.8 M664.1 609.6 v8.6" stroke="#d0d0d0" stroke-width="1.5"/><polygon points="691.50,605.50 693.44,609.73 698.06,610.27 694.64,613.42 695.56,617.98 691.50,615.70 687.44,617.98 688.36,613.42 684.94,610.27 689.56,609.73" fill="#d0d0d0" stroke="#d0d0d0" stroke-width="0.9" stroke-linejoin="round"/><g clip-path="url(#cl2)"><g transform="translate(716 611.7)"><rect x="-1.3" y="-7.4" width="2.6" height="3.4" fill="#c8c8c8" transform="rotate(0)"/><rect x="-1.3" y="-7.4" width="2.6" height="3.4" fill="#c8c8c8" transform="rotate(45)"/><rect x="-1.3" y="-7.4" width="2.6" height="3.4" fill="#c8c8c8" transform="rotate(90)"/><rect x="-1.3" y="-7.4" width="2.6" height="3.4" fill="#c8c8c8" transform="rotate(135)"/><rect x="-1.3" y="-7.4" width="2.6" height="3.4" fill="#c8c8c8" transform="rotate(180)"/><rect x="-1.3" y="-7.4" width="2.6" height="3.4" fill="#c8c8c8" transform="rotate(225)"/><rect x="-1.3" y="-7.4" width="2.6" height="3.4" fill="#c8c8c8" transform="rotate(270)"/><rect x="-1.3" y="-7.4" width="2.6" height="3.4" fill="#c8c8c8" transform="rotate(315)"/><circle r="4.6" fill="none" stroke="#c8c8c8" stroke-width="1.7"/><circle r="2" fill="none" stroke="#9a9a9a" stroke-width="1"/></g></g><path d="M522.8 710.6 L527.1 715 L531.4 710.6" fill="none" stroke="#d8d8d8" stroke-width="1.5"/><path d="M373.2 733.6 A7 7 0 1 0 373.2 740.2" fill="none" stroke="#c8c8c8" stroke-width="1.4"/><path d="M362 736.9 H374.6 M366 732.9 L362 736.9 L366 740.9" fill="none" stroke="#c8c8c8" stroke-width="1.5"/><path d="M384.8 729.6 q0 -0.9 0.9 -0.9 h4.2 l1.6 1.9 h4 q0.9 0 0.9 0.9 v2.4 a4.6 4.6 0 0 0 -3.6 8.6 h-7.1 q-0.9 0 -0.9 -0.9Z" fill="#c8c8c8"/><circle cx="397.2" cy="738.6" r="3" fill="none" stroke="#c8c8c8" stroke-width="1.3"/><path d="M395 741 L391.6 744.4" stroke="#c8c8c8" stroke-width="1.4"/><path d="M3.1 681 h10.1 l-5.05 6.3Z" fill="#858585"/><path d="M3.1 793 h10.1 l-5.05 6.3Z" fill="#858585"/><path d="M3.1 847 h10.1 l-5.05 6.3Z" fill="#858585"/><path d="M3.1 955 h10.1 l-5.05 6.3Z" fill="#858585"/><path d="M4.9 764 v10 l6.3 -5.0Z" fill="#858585"/><path d="M4.9 818 v10 l6.3 -5.0Z" fill="#858585"/><path d="M693 984 H700.4 Q703.6 984 703.6 986.7 Q703.6 989.3 699.2 989.3 M696.6 980.6 L693 984 L696.6 987.4" fill="none" stroke="#d0d0d0" stroke-width="1.5"/><g clip-path="url(#cl3)"><path d="M703.6 657.7 Q703.6 660.8 698.6 660.8" fill="none" stroke="#d0d0d0" stroke-width="1.5"/></g></svg>
</div></body></html>
